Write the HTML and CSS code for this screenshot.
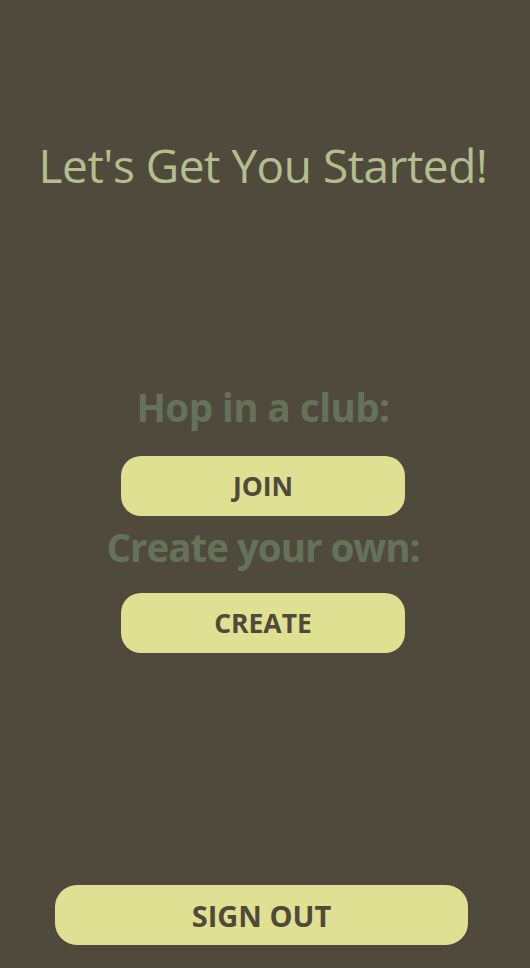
FILE: index.html
```html
<!DOCTYPE html>
<html>
<head>
<meta charset="utf-8">
<link rel="stylesheet" href="styles.css">
</head>
<body>
<main class="page">
  <h1 class="title">Let's Get You Started!</h1>
  <section class="choices">
    <h2 class="label">Hop in a club:</h2>
    <button class="btn btn-first">JOIN</button>
    <h2 class="label label-second">Create your own:</h2>
    <button class="btn">CREATE</button>
  </section>
  <button class="btn btn-wide">SIGN OUT</button>
</main>
</body>
</html>
```
FILE: styles.css
```css
* { box-sizing: border-box; }
html, body { margin: 0; padding: 0; }
body {
  background: #504a3d;
  font-family: "Open Sans", "Noto Sans", sans-serif;
  width: 530px;
  height: 968px;
  overflow: hidden;
}
.page {
  height: 968px;
  padding-right: 4px;
  display: flex;
  flex-direction: column;
  align-items: center;
}
.title {
  margin: 137px 0 0;
  font-weight: 400;
  font-size: 46px;
  line-height: 56px;
  color: #b0bf8d;
  letter-spacing: -0.5px;
}
.choices {
  margin-top: 189px;
  display: flex;
  flex-direction: column;
  align-items: center;
}
.label {
  margin: 0;
  font-size: 38.5px;
  line-height: 50px;
  font-weight: 700;
  color: #65725a;
  letter-spacing: -0.5px;
}
.label-second {
  margin-top: 6px;
  letter-spacing: -1px;
}
.btn {
  margin-top: 21px;
  width: 284px;
  height: 60px;
  border: none;
  border-radius: 20px;
  background: #dfe092;
  color: #4f4a3b;
  font-family: inherit;
  font-weight: 700;
  font-size: 26.5px;
  padding: 0;
  cursor: pointer;
}
.btn-first { margin-top: 24px; }
.btn-wide {
  margin-top: auto;
  margin-bottom: 23px;
  margin-right: 3px;
  width: 413px;
  font-size: 29px;
  border-radius: 22px;
}
```
